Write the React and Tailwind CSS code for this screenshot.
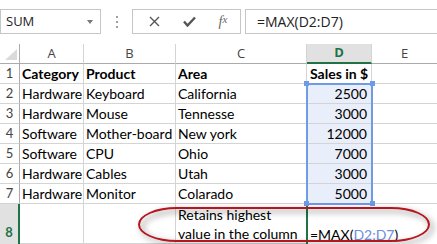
import React from "react";

const cell = "border-r border-b border-[#d4d4d4] flex items-center whitespace-nowrap overflow-visible";
const rows = [
  ["Hardware", "Keyboard", "California", "2500"],
  ["Hardware", "Mouse", "Tennesse", "3000"],
  ["Software", "Mother-board", "New york", "12000"],
  ["Software", "CPU", "Ohio", "7000"],
  ["Hardware", "Cables", "Utah", "3000"],
  ["Hardware", "Monitor", "Colarado", "5000"],
];

export default function App() {
  return (
    <div className="relative w-[437px] h-[244px] overflow-hidden bg-white text-black" style={{ fontFamily: "Lato, 'Liberation Sans', sans-serif" }}>
      {/* toolbar */}
      <div className="flex items-start h-[44px] pt-[9px]" style={{ fontFamily: "'Open Sans', 'Liberation Sans', sans-serif" }}>
        <div className="relative w-[101px] h-[25px] border border-[#c6c6c6] flex items-center pl-[5px] text-[13px] text-[#222]">
          SUM
          <div className="absolute left-[86px] top-[10px] w-0 h-0 border-l-[3.5px] border-r-[3.5px] border-t-[4px] border-l-transparent border-r-transparent border-t-[#777]" />
        </div>
        <div className="w-[31px] h-[25px] flex flex-col items-center justify-center gap-[3px]">
          <div className="w-[2px] h-[2px] bg-[#a0a0a0]" />
          <div className="w-[2px] h-[2px] bg-[#a0a0a0]" />
          <div className="w-[2px] h-[2px] bg-[#a0a0a0]" />
        </div>
        <div className="w-[109px] h-[25px] border border-[#c6c6c6] flex items-center">
          <div className="w-[40px] flex justify-center pl-[2px]">
            <svg width="11" height="11" viewBox="0 0 11 11"><path d="M1 1L10 10M10 1L1 10" stroke="#555" strokeWidth="1.4" /></svg>
          </div>
          <div className="w-[33px] flex justify-center">
            <svg width="13" height="11" viewBox="0 0 13 11"><path d="M1 5.5L4.5 9.5L12 1.5" stroke="#555" strokeWidth="2.4" fill="none" /></svg>
          </div>
          <div className="w-[34px] flex justify-center text-[14px] italic text-[#666]" style={{ fontFamily: "'Liberation Serif', serif" }}>
            f<span className="text-[11px]">x</span>
          </div>
        </div>
        <div className="ml-[4px] flex-1 h-[25px] border border-r-0 border-[#c6c6c6] flex items-center pl-[11px] text-[14px] text-[#222]">
          =MAX(D2:D7)
        </div>
      </div>

      {/* grid */}
      <div className="grid grid-cols-[20px_64px_92px_131px_65px_65px] grid-rows-[20px_repeat(7,20px)_40px] text-[14px]">
        {/* header row */}
        <div className="relative border-r border-b border-[#ababab] bg-white">
          <svg className="absolute left-[5px] top-[5px]" width="12" height="11" viewBox="0 0 12 11"><path d="M12 0L12 11L0 11Z" fill="#dadada" /></svg>
        </div>
        {["A", "B", "C"].map((l) => (
          <div key={l} className="border-r border-b border-r-[#d4d4d4] border-b-[#ababab] flex items-center justify-center text-[13px] text-[#444]" style={{ fontFamily: "'Open Sans', sans-serif" }}>{l}</div>
        ))}
        <div className="border-r border-r-[#d4d4d4] border-b-2 border-b-[#217346] bg-[#e1e1e1] flex items-center justify-center text-[13px] font-bold text-[#217346]" style={{ fontFamily: "'Open Sans', sans-serif" }}>D</div>
        <div className="border-b border-b-[#ababab] flex items-center justify-center text-[13px] text-[#444]" style={{ fontFamily: "'Open Sans', sans-serif" }}>E</div>

        {/* row 1 */}
        <div className="border-r border-b border-r-[#ababab] border-b-[#d4d4d4] flex items-center justify-center text-[13px] text-[#444]">1</div>
        <div className={`${cell} pl-[2px] font-bold`}>Category</div>
        <div className={`${cell} pl-[2px] font-bold`}>Product</div>
        <div className={`${cell} pl-[2px] font-bold`}>Area</div>
        <div className={`${cell} pl-[3px] font-bold`}>Sales in $</div>
        <div className={`${cell} border-r-0`} />

        {rows.map((r, i) => (
          <React.Fragment key={i}>
            <div className="border-r border-b border-r-[#ababab] border-b-[#d4d4d4] flex items-center justify-center text-[13px] text-[#444]">{i + 2}</div>
            <div className={`${cell} pl-[2px]`}>{r[0]}</div>
            <div className={`${cell} pl-[2px]`}>{r[1]}</div>
            <div className={`${cell} pl-[2px]`}>{r[2]}</div>
            <div className={`${cell} justify-end pr-[4px] bg-[#e8eefa]`}>{r[3]}</div>
            <div className={`${cell} border-r-0`} />
          </React.Fragment>
        ))}

        {/* row 8 */}
        <div className="border-r-2 border-r-[#217346] bg-[#e1e1e1] flex items-end justify-center pb-[2px] text-[13px] font-bold text-[#217346]">8</div>
        <div className={`${cell}`} />
        <div className={`${cell}`} />
        <div className={`${cell} items-end pl-[2px] leading-[19px] whitespace-normal`}>
          <div>Retains highest<br />value in the column</div>
        </div>
        <div className="relative flex items-end pl-[2px] leading-[19px] whitespace-nowrap border-t-2 border-l-2 border-[#217346] -mt-[1px] -ml-[1px]">
          <span>=MAX(<span className="text-[#6d8fe0]">D2:D7</span>)</span>
          <span className="inline-block w-[1px] h-[16px] bg-black ml-[1px] mb-[2px]" />
        </div>
        <div />
      </div>

      {/* selection border D2:D7 */}
      <div className="absolute left-[306px] top-[83px] w-[67px] h-[122px] border-2 border-[#6f9ae6] pointer-events-none" />
      <div className="absolute left-[304px] top-[81px] w-[5px] h-[5px] bg-[#6f9ae6]" />
      <div className="absolute left-[370px] top-[81px] w-[5px] h-[5px] bg-[#6f9ae6]" />
      <div className="absolute left-[304px] top-[201px] w-[5px] h-[5px] bg-[#6f9ae6]" />
      <div className="absolute left-[370px] top-[201px] w-[5px] h-[5px] bg-[#6f9ae6]" />

      {/* red callout ring */}
      <div className="absolute left-[138px] top-[207px] w-[292px] h-[35px] rounded-[40px/18px] border-2 border-[#b8161f] drop-shadow-[3px_3px_3px_rgba(0,0,0,0.55)]" />
    </div>
  );
}
